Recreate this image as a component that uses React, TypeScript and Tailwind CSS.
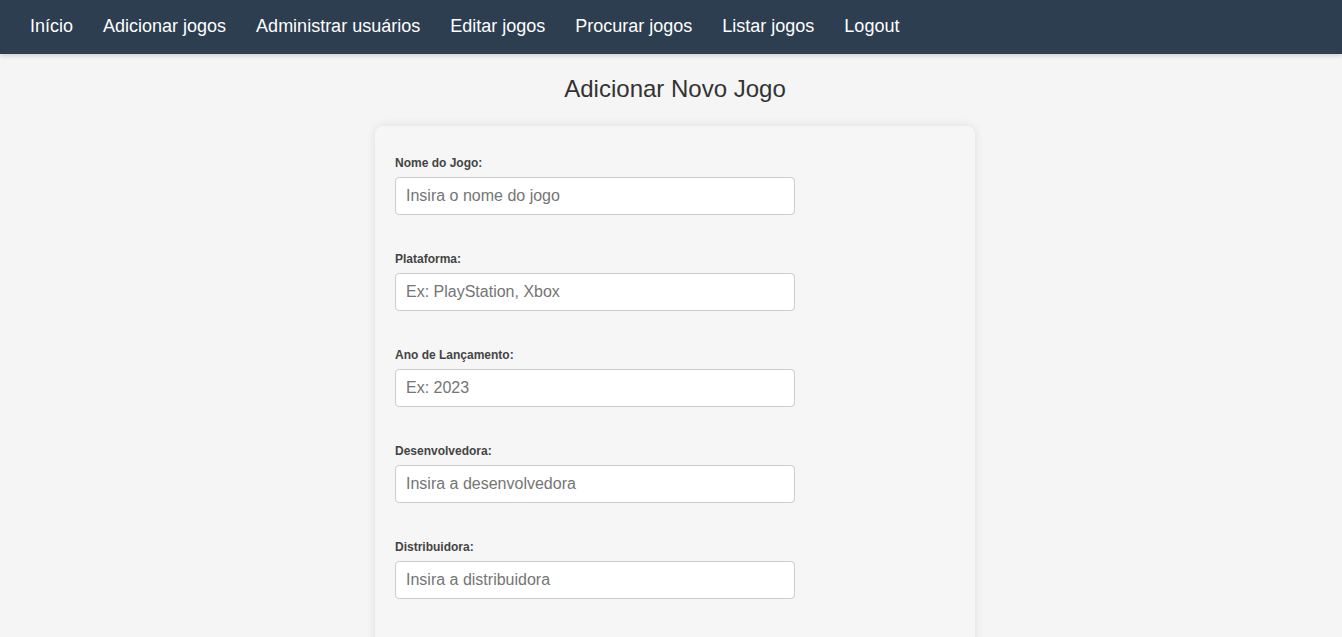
const links = ['Início', 'Adicionar jogos', 'Administrar usuários', 'Editar jogos', 'Procurar jogos', 'Listar jogos', 'Logout'];

const fields = [
  { id: 'nome', label: 'Nome do Jogo:', placeholder: 'Insira o nome do jogo' },
  { id: 'plataforma', label: 'Plataforma:', placeholder: 'Ex: PlayStation, Xbox' },
  { id: 'ano', label: 'Ano de Lançamento:', placeholder: 'Ex: 2023' },
  { id: 'desenvolvedora', label: 'Desenvolvedora:', placeholder: 'Insira a desenvolvedora' },
  { id: 'distribuidora', label: 'Distribuidora:', placeholder: 'Insira a distribuidora' },
];

export default function App() {
  return (
    <div className="min-h-screen bg-[#f5f5f5] font-['Liberation_Sans',Arial,sans-serif] text-[#333]">
      <nav className="flex h-[54px] items-center bg-[#2c3e50] px-[15px] pb-[2px] shadow-[0_2px_5px_rgba(0,0,0,0.15)]">
        {links.map((l) => (
          <a key={l} href="#" className="px-[15px] text-[18px] leading-[21px] text-white">
            {l}
          </a>
        ))}
      </nav>

      <main className="pl-2">
        <h2 className="mt-[21px] text-center text-[24px] leading-[28px] text-[#333]">Adicionar Novo Jogo</h2>

        <div className="mx-auto mt-[23px] w-[600px] rounded-lg bg-[#f6f6f6] px-5 pt-[30px] pb-5 shadow-[0_0_10px_rgba(0,0,0,0.1)]">
          <form onSubmit={(e) => e.preventDefault()}>
            {fields.map((f) => (
              <div key={f.id} className="mb-[37px]">
                <label htmlFor={f.id} className="mb-[7px] block text-[12px] font-bold leading-[14px] text-[#444]">
                  {f.label}
                </label>
                <input
                  id={f.id}
                  placeholder={f.placeholder}
                  className="block h-[38px] w-[400px] rounded border border-[#ccc] bg-white px-[10px] text-[16px] text-[#333] placeholder:text-[#757575] focus:outline-none"
                />
              </div>
            ))}
          </form>
        </div>
      </main>
    </div>
  );
}
